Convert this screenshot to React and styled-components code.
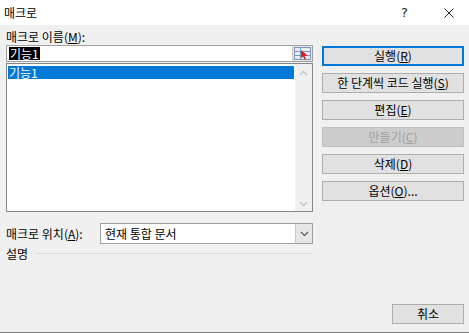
import React from "react";
import styled, { createGlobalStyle } from "styled-components";

const Global = createGlobalStyle`
  html, body { margin: 0; padding: 0; background: #f0f0f0; }
  body { font-family: "Noto Sans CJK KR", "Noto Sans", sans-serif; font-size: 12px; color: #000; }
  u { text-decoration: underline; text-underline-offset: 1px; }
`;

const Window = styled.div`
  width: 469px;
  height: 333px;
  box-sizing: border-box;
  background: #f0f0f0;
  display: flex;
  flex-direction: column;
  border-bottom: 1px solid #7a7a7a;
  overflow: hidden;
`;

const TitleBar = styled.div`
  height: 25px;
  background: #fff;
  display: flex;
  align-items: center;
  padding-left: 4px;
  padding-right: 15px;
  font-size: 12px;
  line-height: 12px;
`;

const TitleText = styled.span`
  flex: 1;
`;

const HelpMark = styled.span`
  font-size: 13px;
  font-family: "DejaVu Sans", sans-serif;
  color: #222;
  margin-right: 36px;
`;

const Body = styled.div`
  flex: 1;
  display: grid;
  grid-template-columns: 307px 142px;
  column-gap: 9px;
  padding: 0 5px 0 6px;
  position: relative;
`;

const LeftCol = styled.div`
  display: flex;
  flex-direction: column;
`;

const Label = styled.div`
  height: 16px;
  line-height: 16px;
  margin-top: ${p => p.$mt || 0}px;
  white-space: nowrap;
`;

const NameField = styled.div`
  height: 17px;
  box-sizing: border-box;
  border: 1px solid #a0a0a0;
  background: #fff;
  display: flex;
  align-items: center;
  padding-left: 2px;
`;

const Selected = styled.span`
  background: #000;
  color: #fff;
  line-height: 13px;
  padding: 0 1px;
`;

const FieldSpacer = styled.div`
  flex: 1;
`;

const RefButton = styled.div`
  width: 19px;
  height: 15px;
  background: #e6e6e6;
  border-left: 1px solid #c8c8c8;
  display: flex;
  align-items: center;
  justify-content: center;
`;

const List = styled.div`
  margin-top: 1px;
  height: 149px;
  box-sizing: border-box;
  border: 1px solid #828790;
  background: #fff;
  display: flex;
`;

const Items = styled.div`
  flex: 1;
  padding: 2px 1px 0 1px;
`;

const Item = styled.div`
  height: 13px;
  line-height: 13px;
  padding-left: 1px;
  background: ${p => (p.$active ? "#0078d7" : "transparent")};
  color: ${p => (p.$active ? "#fff" : "#000")};
`;

const Scrollbar = styled.div`
  width: 17px;
  background: #f0f0f0;
  display: flex;
  flex-direction: column;
  justify-content: space-between;
  align-items: center;
  padding: 6px 0 4px;
`;

const LocationRow = styled.div`
  margin-top: 11px;
  display: flex;
  align-items: center;
`;

const LocationLabel = styled.span`
  width: 94px;
  white-space: nowrap;
`;

const Select = styled.div`
  flex: 1;
  height: 21px;
  box-sizing: border-box;
  border: 1px solid #a0a0a0;
  background: #fff;
  display: flex;
  align-items: center;
  padding-left: 4px;
`;

const SelectText = styled.span`
  flex: 1;
`;

const DropButton = styled.div`
  width: 16px;
  height: 19px;
  background: #e6e6e6;
  border-left: 1px solid #c8c8c8;
  display: flex;
  align-items: center;
  justify-content: center;
`;

const DescRow = styled.div`
  margin-top: 1px;
  display: flex;
  align-items: center;
  gap: 7px;
  height: 16px;
`;

const Rule = styled.div`
  flex: 1;
  height: 1px;
  background: #dcdcdc;
`;

const RightCol = styled.div`
  display: flex;
  flex-direction: column;
  gap: 7px;
  padding-top: 21px;
`;

const Button = styled.div`
  height: 20px;
  box-sizing: border-box;
  border: ${p => (p.$default ? "2px solid #0078d7" : p.$disabled ? "1px solid #bfbfbf" : "1px solid #adadad")};
  background: ${p => (p.$disabled ? "#cccccc" : "#e1e1e1")};
  color: ${p => (p.$disabled ? "#a0a0a0" : "#000")};
  display: flex;
  align-items: center;
  justify-content: center;
  line-height: 14px;
  white-space: nowrap;
`;

const CancelWrap = styled.div`
  position: absolute;
  right: 5px;
  bottom: 8px;
  width: 72px;
`;

const Chevron = ({ up }) => (
  <svg width="9" height="6" viewBox="0 0 9 6">
    <path d={up ? "M1 5 L4.5 1.5 L8 5" : "M1 1 L4.5 4.5 L8 1"} fill="none" stroke="#c0c0c0" strokeWidth="1.3" />
  </svg>
);

const RefIcon = () => (
  <svg width="17" height="13" viewBox="0 0 17 13">
    <rect x="0.5" y="0.5" width="16" height="12" fill="#e4ebf5" stroke="#7f97b8" />
    <line x1="1" y1="4.5" x2="16" y2="4.5" stroke="#7f97b8" />
    <line x1="1" y1="8.5" x2="16" y2="8.5" stroke="#7f97b8" />
    <line x1="6.5" y1="1" x2="6.5" y2="12" stroke="#7f97b8" />
    <path d="M7 3 L13.5 8.5 L10.5 9 L12 12 L10.5 12.5 L9 9.5 L7 11 Z" fill="#d42020" />
  </svg>
);

const CloseIcon = () => (
  <svg width="10" height="10" viewBox="0 0 10 10">
    <path d="M0.5 0.5 L9.5 9.5 M9.5 0.5 L0.5 9.5" stroke="#222" strokeWidth="1" />
  </svg>
);

const DownArrow = () => (
  <svg width="9" height="6" viewBox="0 0 9 6">
    <path d="M1 1 L4.5 4.5 L8 1" fill="none" stroke="#555" strokeWidth="1.2" />
  </svg>
);

export default function App() {
  return (
    <>
      <Global />
      <Window>
        <TitleBar>
          <TitleText>매크로</TitleText>
          <HelpMark>?</HelpMark>
          <CloseIcon />
        </TitleBar>
        <Body>
          <LeftCol>
            <Label $mt={4}>매크로 이름(<u>M</u>):</Label>
            <NameField>
              <Selected>기능1</Selected>
              <FieldSpacer />
              <RefButton><RefIcon /></RefButton>
            </NameField>
            <List>
              <Items>
                <Item $active>기능1</Item>
              </Items>
              <Scrollbar>
                <Chevron up />
                <Chevron />
              </Scrollbar>
            </List>
            <LocationRow>
              <LocationLabel>매크로 위치(<u>A</u>):</LocationLabel>
              <Select>
                <SelectText>현재 통합 문서</SelectText>
                <DropButton><DownArrow /></DropButton>
              </Select>
            </LocationRow>
            <DescRow>
              <span>설명</span>
              <Rule />
            </DescRow>
          </LeftCol>
          <RightCol>
            <Button $default>실행(<u>R</u>)</Button>
            <Button>한 단계씩 코드 실행(<u>S</u>)</Button>
            <Button>편집(<u>E</u>)</Button>
            <Button $disabled>만들기(<u>C</u>)</Button>
            <Button>삭제(<u>D</u>)</Button>
            <Button>옵션(<u>O</u>)...</Button>
          </RightCol>
          <CancelWrap>
            <Button>취소</Button>
          </CancelWrap>
        </Body>
      </Window>
    </>
  );
}
